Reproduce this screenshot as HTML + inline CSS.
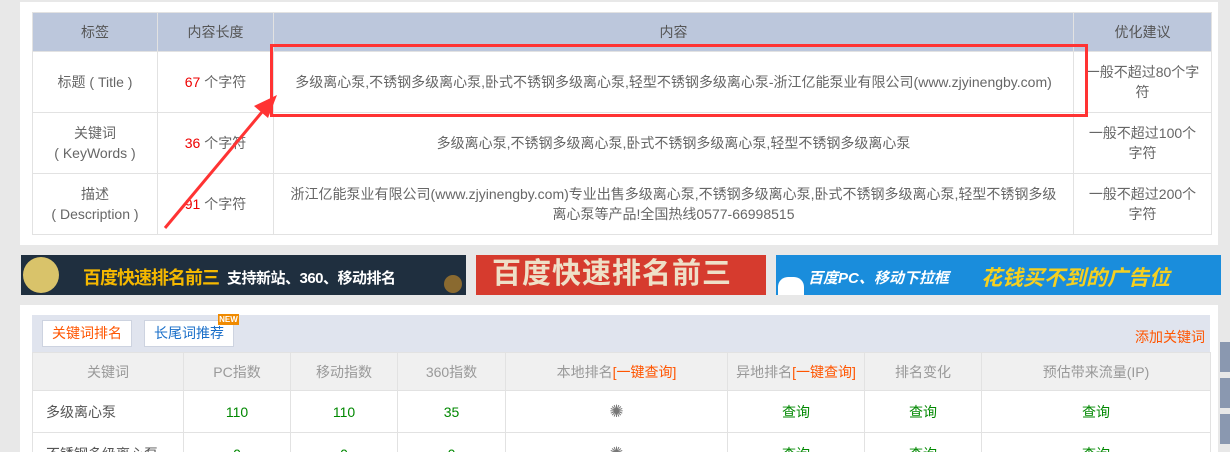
<!DOCTYPE html>
<html><head><meta charset="utf-8"><style>
*{margin:0;padding:0;box-sizing:border-box}
html,body{width:1230px;height:452px;overflow:hidden}
body{background:#e8e8e8;font-family:"Liberation Sans","Noto Sans CJK SC",sans-serif;font-size:14px;color:#666;position:relative}
.abs{position:absolute}
table{border-collapse:collapse;table-layout:fixed}
td,th{border:1px solid #e2e2e2;text-align:center;font-weight:normal;line-height:20px;overflow:hidden;white-space:nowrap}
.t1 th{background:#bcc7dc;color:#555;height:39px}
.red{color:#e00}
.g{color:#080}
.o{color:#f50}
</style></head><body>
<div class="abs" style="left:20px;top:2px;width:1198px;height:243px;background:#fff"></div>
<table class="abs t1" style="left:32px;top:12px;width:1179px">
<colgroup><col style="width:125px"><col style="width:116px"><col style="width:800px"><col style="width:138px"></colgroup>
<tr><th>标签</th><th>内容长度</th><th>内容</th><th>优化建议</th></tr>
<tr style="height:61px"><td>标题 ( Title )</td><td><span class="red">67</span> 个字符</td><td>多级离心泵,不锈钢多级离心泵,卧式不锈钢多级离心泵,轻型不锈钢多级离心泵-浙江亿能泵业有限公司(www.zjyinengby.com)</td><td>一般不超过80个字<br>符</td></tr>
<tr style="height:61px"><td>关键词<br>( KeyWords )</td><td><span class="red">36</span> 个字符</td><td>多级离心泵,不锈钢多级离心泵,卧式不锈钢多级离心泵,轻型不锈钢多级离心泵</td><td>一般不超过100个<br>字符</td></tr>
<tr style="height:61px"><td>描述<br>( Description )</td><td><span class="red">91</span> 个字符</td><td>浙江亿能泵业有限公司(www.zjyinengby.com)专业出售多级离心泵,不锈钢多级离心泵,卧式不锈钢多级离心泵,轻型不锈钢多级<br>离心泵等产品!全国热线0577-66998515</td><td>一般不超过200个<br>字符</td></tr>
</table>
<div class="abs" style="left:270px;top:44px;width:818px;height:73px;border:3px solid #f33"></div>
<svg class="abs" style="left:0;top:0" width="1230" height="452"><line x1="165" y1="228" x2="262" y2="112" stroke="#f33" stroke-width="3"/><polygon points="277,95 254,106 268,118" fill="#f33"/></svg>

<div class="abs" style="left:21px;top:255px;width:445px;height:40px;background:#1f2f3f;overflow:hidden"><div class="abs" style="left:2px;top:2px;width:36px;height:36px;border-radius:50%;background:#d9c36a"></div><span class="abs" style="left:62px;top:9px;font-size:18px;color:#f5b800;font-weight:bold;letter-spacing:-1px">百度快速排名前三</span><span class="abs" style="left:206px;top:12px;font-size:15px;color:#fff;font-weight:bold;letter-spacing:-0.5px">支持新站、360、移动排名</span><div class="abs" style="left:423px;top:20px;width:18px;height:18px;border-radius:50%;background:#8a6a30"></div></div>
<div class="abs" style="left:476px;top:255px;width:290px;height:40px;background:#d63b2e;overflow:hidden"><span class="abs" style="left:16px;top:0px;font-size:29px;line-height:38px;color:#eee0c8;font-weight:bold;letter-spacing:1px">百度快速排名前三</span></div>
<div class="abs" style="left:776px;top:255px;width:445px;height:40px;background:#1a8ddc;overflow:hidden"><div class="abs" style="left:2px;top:22px;width:26px;height:18px;border-radius:10px 10px 0 0;background:#fff"></div><span class="abs" style="left:32px;top:12px;font-size:15px;color:#fff;font-weight:bold;font-style:italic">百度PC、移动下拉框</span><span class="abs" style="left:205px;top:7px;font-size:21px;color:#f5d020;font-weight:bold;font-style:italic">花钱买不到的广告位</span></div>

<div class="abs" style="left:20px;top:305px;width:1198px;height:147px;background:#fff"></div>
<div class="abs" style="left:32px;top:315px;width:1178px;height:37px;background:#e0e4ee"></div>
<div class="abs" style="left:42px;top:320px;width:90px;height:27px;background:#fff;border:1px solid #cdd3e0;color:#f50;text-align:center;line-height:25px;font-size:14px">关键词排名</div>
<div class="abs" style="left:144px;top:320px;width:90px;height:27px;background:#fff;border:1px solid #cdd3e0;color:#1a6fc9;text-align:center;line-height:25px;font-size:14px">长尾词推荐</div>
<div class="abs" style="left:218px;top:314px;width:21px;height:11px;background:#f08a00;color:#fff;font-size:8px;line-height:11px;text-align:center;font-weight:bold">NEW</div>
<div class="abs o" style="left:1135px;top:327px;font-size:14px">添加关键词</div>
<div class="abs" style="left:32px;top:352px;width:1179px;height:100px;overflow:hidden">
<table style="width:1178px">
<colgroup><col style="width:151px"><col style="width:107px"><col style="width:107px"><col style="width:108px"><col style="width:222px"><col style="width:137px"><col style="width:117px"><col style="width:229px"></colgroup>
<tr style="height:38px;background:#f0f0f0;color:#999"><td>关键词</td><td>PC指数</td><td>移动指数</td><td>360指数</td><td>本地排名<span class="o">[一键查询]</span></td><td>异地排名<span class="o">[一键查询]</span></td><td>排名变化</td><td>预估带来流量(IP)</td></tr>
<tr style="height:42px;color:#555"><td style="text-align:left;padding-left:13px">多级离心泵</td><td class="g">110</td><td class="g">110</td><td class="g">35</td><td style="color:#777;font-size:17px">✺</td><td class="g">查询</td><td class="g">查询</td><td class="g">查询</td></tr>
<tr style="height:42px;color:#555"><td style="text-align:left;padding-left:13px">不锈钢多级离心泵</td><td class="g">0</td><td class="g">0</td><td class="g">0</td><td style="color:#777;font-size:17px">✺</td><td class="g">查询</td><td class="g">查询</td><td class="g">查询</td></tr>
</table>
</div>
<div class="abs" style="left:1220px;top:342px;width:10px;height:30px;background:#8a98b0"></div>
<div class="abs" style="left:1220px;top:378px;width:10px;height:30px;background:#8a98b0"></div>
<div class="abs" style="left:1220px;top:414px;width:10px;height:30px;background:#8a98b0"></div>
</body></html>
